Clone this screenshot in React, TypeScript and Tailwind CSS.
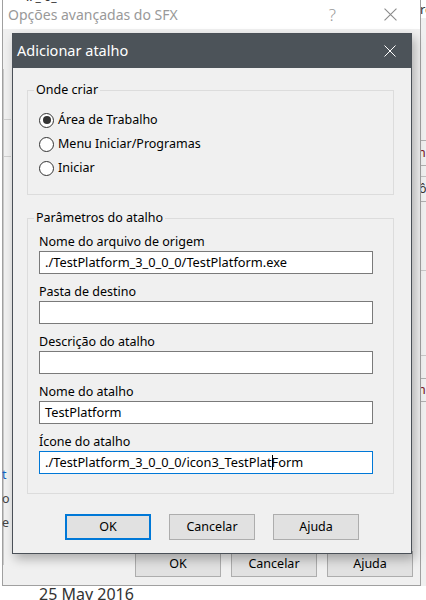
import React from "react";

function XIcon({ color, size = 12 }: { color: string; size?: number }) {
  return (
    <svg width={size} height={size} viewBox="0 0 12 12" className="block">
      <path d="M0.5 0.5 L11.5 11.5 M11.5 0.5 L0.5 11.5" stroke={color} strokeWidth="1" fill="none" />
    </svg>
  );
}

function Radio({ checked, label }: { checked?: boolean; label: string }) {
  return (
    <div className="flex items-center h-[24px]">
      <span className="w-[15px] h-[15px] rounded-full border border-[#333333] bg-white flex items-center justify-center">
        {checked && <span className="w-[8px] h-[8px] rounded-full bg-[#333333]" />}
      </span>
      <span className="ml-[4px]">{label}</span>
    </div>
  );
}

function Field({
  label,
  value,
  active,
  caret,
}: {
  label: string;
  value?: string;
  active?: boolean;
  caret?: [string, string];
}) {
  return (
    <div className="flex flex-col">
      <div className="h-[16px] leading-[16px]">{label}</div>
      <div
        className={
          active
            ? "mt-[1px] w-[334px] h-[23px] bg-white border border-[#0078d7] pl-[5px] flex items-center whitespace-nowrap text-[12.8px]"
            : "mt-[1px] w-[334px] h-[23px] bg-white border border-[#7a7a7a] pl-[5px] flex items-center whitespace-nowrap text-[12.8px]"
        }
      >
        {caret ? (
          <>
            <span>{caret[0]}</span>
            <span className="inline-block w-[1px] h-[15px] bg-black -mr-[1px]" />
            <span>{caret[1]}</span>
          </>
        ) : (
          <span>{value}</span>
        )}
      </div>
    </div>
  );
}

export default function App() {
  return (
    <div className="relative w-[426px] h-[600px] overflow-hidden bg-white flex flex-col font-['Noto_Sans',sans-serif] text-[12.5px] text-black">
      {/* top strip of content behind */}
      <div className="h-[3px] relative">
        <div className="absolute left-[16px] top-[-9px] text-[12px] text-[#333] leading-[12px]">~ .. _ o_ ''''</div>
      </div>
      <div className="flex">
        {/* background window */}
        <div className="ml-[2px] w-[419px] h-[586px] border-l border-r border-b border-[#a0a0a0] flex flex-col bg-[#f0f0f0]">
          <div className="h-[29px] bg-white flex items-center pl-[5px] shrink-0">
            <span className="text-[14px] text-[#999999]">Opções avançadas do SFX</span>
            <span className="ml-auto text-[17px] text-[#9a9a9a] font-light mr-[48px] leading-[17px]">?</span>
            <span className="mr-[23px]">
              <XIcon color="#8a8a8a" size={13} />
            </span>
          </div>
          <div className="flex-1 flex">
            <div className="w-[8px] mt-[40px] mb-[20px] border-l border-[#c8c8c8] flex flex-col">
              <div className="mt-[50px] h-[1px] bg-[#d0d0d0]" />
              <div className="mt-[36px] h-[1px] bg-[#d0d0d0]" />
              <div className="mt-[306px] text-[#1565c0] leading-[24px] -ml-[2px]">t</div>
              <div className="leading-[24px] text-[#444] -ml-[2px]">o</div>
              <div className="leading-[24px] text-[#444] -ml-[2px]">e</div>
            </div>
            <div className="flex-1 flex flex-col justify-end pb-[8px] pr-[7px]">
              <div className="flex justify-end gap-[10px]">
                <div className="w-[86px] h-[26px] bg-[#e1e1e1] border border-[#adadad] flex items-center justify-center">OK</div>
                <div className="w-[86px] h-[26px] bg-[#e1e1e1] border border-[#adadad] flex items-center justify-center">Cancelar</div>
                <div className="w-[86px] h-[26px] bg-[#e1e1e1] border border-[#adadad] flex items-center justify-center">Ajuda</div>
              </div>
            </div>
          </div>
        </div>
        {/* strip of window further behind */}
        <div className="flex-1 bg-[#f0f0f0] flex flex-col overflow-hidden">
          <div className="h-[18px] bg-white text-[13px] leading-[18px] -ml-[1px] text-[#333]">re</div>
          <div className="mt-[122px] h-[1px] bg-[#b0b0b0]" />
          <div className="h-[24px] leading-[24px] text-[#7a1020] -ml-[3px]">np</div>
          <div className="h-[1px] bg-[#b0b0b0]" />
          <div className="mt-[10px] h-[1px] bg-[#c0c0c0]" />
          <div className="h-[24px] leading-[24px] text-[#333] -ml-[2px]">ô</div>
          <div className="h-[1px] bg-[#b0b0b0]" />
          <div className="mt-[68px] h-[1px] bg-[#c8c8c8]" />
          <div className="mt-[84px] h-[1px] bg-[#c8c8c8]" />
          <div className="mt-[22px] h-[1px] bg-[#b0b0b0]" />
          <div className="h-[22px] leading-[22px] text-[#7a1020] -ml-[3px]">nc</div>
          <div className="h-[1px] bg-[#b0b0b0]" />
        </div>
      </div>
      <div className="pl-[39px] -mt-[2px] text-[16px] leading-[20px] text-[#333333]">25 May 2016</div>

      {/* dialog */}
      <div className="absolute left-[12px] top-[33px] w-[400px] h-[521px] border border-[#4a5057] flex flex-col shadow-[3px_5px_10px_rgba(0,0,0,0.28)]">
        <div className="h-[34px] shrink-0 bg-[#4c5359] flex items-center pl-[4px] pr-[15px]">
          <span className="text-[14.5px] text-white">Adicionar atalho</span>
          <span className="ml-auto">
            <XIcon color="#ffffff" size={12} />
          </span>
        </div>
        <div className="flex-1 bg-[#f0f0f0] flex flex-col pl-[14px] pt-[14px]">
          <fieldset className="w-[367px] border border-[#dcdcdc] pl-[11px] pt-[10px] pb-[14px]">
            <legend className="-ml-[5px] px-[2px] leading-[16px]">Onde criar</legend>
            <Radio checked label="Área de Trabalho" />
            <Radio label="Menu Iniciar/Programas" />
            <Radio label="Iniciar" />
          </fieldset>
          <fieldset className="mt-[15px] w-[367px] border border-[#dcdcdc] pl-[11px] pt-[8px] pb-[19px] flex flex-col gap-[10px]">
            <legend className="-ml-[5px] px-[2px] leading-[16px]">Parâmetros do atalho</legend>
            <Field label="Nome do arquivo de origem" value="./TestPlatform_3_0_0_0/TestPlatform.exe" />
            <Field label="Pasta de destino" value="" />
            <Field label="Descrição do atalho" value="" />
            <Field label="Nome do atalho" value="TestPlatform" />
            <Field
              label="Ícone do atalho"
              active
              caret={["./TestPlatform_3_0_0_0/icon3_TestPlat", "Form"]}
            />
          </fieldset>
          <div className="mt-[20px] flex gap-[18px] pl-[38px]">
            <div className="w-[86px] h-[26px] bg-[#e1e1e1] border-2 border-[#0078d7] flex items-center justify-center">OK</div>
            <div className="w-[86px] h-[26px] bg-[#e1e1e1] border border-[#adadad] flex items-center justify-center">Cancelar</div>
            <div className="w-[86px] h-[26px] bg-[#e1e1e1] border border-[#adadad] flex items-center justify-center">Ajuda</div>
          </div>
        </div>
      </div>
    </div>
  );
}
